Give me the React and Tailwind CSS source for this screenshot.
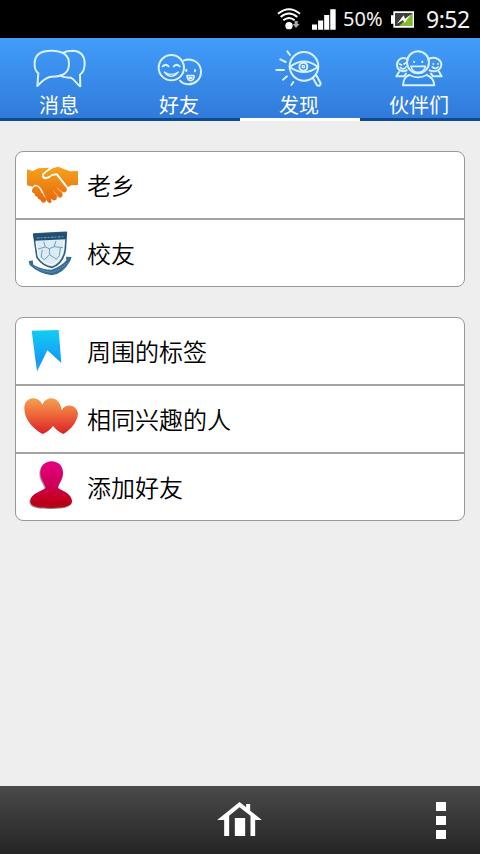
import { useState } from "react"

const stroke = { fill: "none", stroke: "#d8f1ff", strokeWidth: 6, strokeLinecap: "round", strokeLinejoin: "round" }

function ChatIcon() {
  return (
    <svg viewBox="0 6 360 162" className="w-[120px] h-[54px] block" {...stroke}>
      <path d="M112 150 L115 112 C104 104 103 92 104 80 C105 55 124 44 154 44 C188 44 207 56 207 83 C207 111 190 122 155 122 C132 124 125 139 112 150 Z" />
      <path d="M191 50 C198 45 208 44 218 44 C244 45 254 60 254 83 C254 101 249 109 240 116 L241 151 C230 144 224 130 212 125 C200 125 190 124 182 119" />
    </svg>
  )
}

function SmileIcon() {
  return (
    <svg viewBox="360 6 360 162" className="w-[120px] h-[54px] block" {...stroke}>
      <circle cx="514" cy="95" r="38" />
      <path d="M488 91 q9 -9 18 0 M521 91 q9 -9 18 0" />
      <path d="M493 108 Q514 134 535 108 Q514 122 493 108 Z" strokeWidth="4" />
      <path d="M552 73 C576 64 603 80 603 107 C603 132 582 145 566 145 C554 145 546 141 540 134" />
      <path d="M559 101 v4 M585 102 v4" />
      <path d="M561 119 H582 Q583 133 572 134 Q562 133 561 119 Z" strokeWidth="5" />
      <path d="M568 126 h7" />
    </svg>
  )
}

function DiscoverIcon() {
  return (
    <svg viewBox="0 6 360 162" className="w-[120px] h-[54px] block" {...stroke}>
      <circle cx="192" cy="91" r="43" />
      <path d="M149 93 Q192 60 234 93 Q192 123 149 93 Z" />
      <circle cx="190" cy="92" r="12" />
      <rect x="187" y="89" width="6" height="6" strokeWidth="4" />
      <path d="M219 127 L231 148 Q241 152 242 142 L229 118" />
      <path d="M142 46 L150 57 M121 70 L137 78 M109 102 L132 102 M129 131 L141 121 M154 147 L160 138" />
    </svg>
  )
}

function PartnersIcon() {
  return (
    <svg viewBox="360 6 360 162" className="w-[120px] h-[54px] block" {...stroke}>
      <circle cx="534" cy="79" r="33" />
      <path d="M522 77 v1 M547 77 v1" />
      <path d="M513 91 H556 Q552 109 534 109 Q517 109 513 91 Z" strokeWidth="5" />
      <path d="M508 117 C492 123 490 135 489 148 H583 C582 135 577 123 560 117" />
      <path d="M508 117 Q534 131 560 117" strokeWidth="5" />
      <path d="M499 68 C482 61 470 75 471 88 C472 102 486 110 500 103" />
      <path d="M568 68 C588 60 605 73 604 87 C602 103 585 110 569 103" />
      <path d="M479 84 l6 3 M497 81 l-5 3 M481 94 q9 10 17 -1 M580 83 v2 M594 83 v2 M577 93 q10 8 17 0" strokeWidth="5" />
      <path d="M477 108 L469 121 H492 L498 113 M597 107 L605 121 H579 L573 113" />
    </svg>
  )
}

function HandshakeIcon() {
  return (
    <svg viewBox="24 21 213 198" className="w-[71px] h-[66px] block shrink-0">
      <defs>
        <linearGradient id="orange" x1="0" y1="65" x2="0" y2="176" gradientUnits="userSpaceOnUse">
          <stop offset="0" stopColor="#f6a31c" />
          <stop offset="1" stopColor="#e8650c" />
        </linearGradient>
      </defs>
      <g fill="url(#orange)">
        <path d="M57 73 L74 78 L91 70 L124 68 L103 86 Q99 98 109 102 Q120 105 132 93 L145 91 L171 124 Q181 133 174 140 Q168 145 160 139 Q168 150 160 157 Q153 160 146 153 Q149 164 140 166 Q133 167 128 160 Q134 174 126 174 Q116 173 112 156 L101 133 Q93 119 80 119 L74 125 L57 121 Z" />
        <path d="M150 65 L186 79 L210 78 V120 L190 121 L180 126 L148 85 L132 87 Q118 101 107 94 Q107 87 120 79 Q134 67 150 65 Z" />
        <path d="M78 126 Q86 120 94 130 L101 143 Q108 147 107 153 Q116 158 114 168 Q109 176 101 171 L97 164 Q89 163 88 155 Q79 154 80 146 Q71 144 72 136 Q73 129 78 126 Z" />
      </g>
      <path d="M136 139 L151 155 M147 129 L164 143" stroke="#fbd9a6" strokeWidth="2" fill="none" />
    </svg>
  )
}

function SchoolIcon() {
  return (
    <svg viewBox="24 15 213 198" className="w-[71px] h-[66px] block shrink-0" strokeLinejoin="round">
      <path d="M77 57 Q126 54 175 52 L172 103 Q166 144 133 157 Q104 153 87 127 Z" fill="#dcecf5" stroke="#2d5f83" strokeWidth="5" />
      <path d="M76 57 L176 52 L174 73 L79 77 Z" fill="#214f73" />
      <path d="M86 69 L168 65" stroke="#7fa6c0" strokeWidth="3" strokeDasharray="9 3 5 4" fill="none" />
      <path d="M84 82 L91 123 Q106 146 132 150 Q158 138 166 101 L168 78" stroke="#fff" strokeWidth="3" fill="none" />
      <path d="M112 96 L124 101 L138 95 M124 101 L125 119 M112 96 L107 80 M138 95 L144 78 M112 96 L90 102 M138 95 L165 98 M125 119 L109 134 M125 119 L145 133 M103 105 L99 126 L109 134 M157 99 L154 122 L145 133" stroke="#6d9ebd" strokeWidth="3" fill="none" />
      <path d="M62 139 L74 136 L76 149 Q103 164 130 164 Q158 156 175 136 L174 125 L191 126 L187 137 Q165 177 131 181 Q91 175 65 150 Z" fill="#356d94" />
      <path d="M80 156 Q103 169 131 172 Q158 165 176 144" stroke="#6b9dbd" strokeWidth="3" strokeDasharray="6 2" fill="none" />
    </svg>
  )
}

function TagIcon() {
  return (
    <svg viewBox="24 18 213 198" className="w-[71px] h-[66px] block shrink-0">
      <defs>
        <linearGradient id="blue" x1="0" y1="54" x2="0" y2="180" gradientUnits="userSpaceOnUse">
          <stop offset="0" stopColor="#12cdf2" />
          <stop offset="0.75" stopColor="#1599f5" />
          <stop offset="1" stopColor="#3bb0f8" />
        </linearGradient>
      </defs>
      <path d="M71 56 L152 54 L160 153 L118 115 L87 179 Z" fill="url(#blue)" />
    </svg>
  )
}

function HeartsIcon() {
  return (
    <svg viewBox="24 18 213 198" className="w-[71px] h-[66px] block shrink-0">
      <defs>
        <linearGradient id="red" x1="0" y1="55" x2="0" y2="162" gradientUnits="userSpaceOnUse">
          <stop offset="0" stopColor="#f5a04f" />
          <stop offset="0.5" stopColor="#ec6238" />
          <stop offset="1" stopColor="#dc1f27" />
        </linearGradient>
      </defs>
      <path d="M104 162 C84 151 49 125 49 84 C49 49 92 45 103 74 C114 45 157 47 161 91 C171 69 208 72 210 103 C206 130 186 151 166 162 C154 157 144 149 135 138 C126 150 115 158 104 162 Z" fill="url(#red)" />
    </svg>
  )
}

function PersonIcon() {
  return (
    <svg viewBox="24 12 213 198" className="w-[71px] h-[66px] block shrink-0">
      <defs>
        <linearGradient id="pink" x1="0" y1="34" x2="0" y2="176" gradientUnits="userSpaceOnUse">
          <stop offset="0" stopColor="#e6007e" />
          <stop offset="0.5" stopColor="#cf0058" />
          <stop offset="0.8" stopColor="#c4051f" />
          <stop offset="1" stopColor="#ae0712" />
        </linearGradient>
        <filter id="shade">
          <feDropShadow dx="-2" dy="3" stdDeviation="2" floodColor="#000" floodOpacity="0.5" />
        </filter>
      </defs>
      <path d="M131 34 C152 34 165 49 165 69 C165 88 154 97 150 113 C156 121 192 128 192 154 C192 169 168 174 129 174 C90 174 67 170 67 154 C67 130 106 122 113 113 C108 97 97 88 97 69 C97 49 110 34 131 34 Z" fill="url(#pink)" filter="url(#shade)" />
    </svg>
  )
}

function StatusBar() {
  return (
    <div className="h-[38px] bg-black flex items-center justify-end pr-[10px] text-[#f2f2f2] font-['Noto_Sans',sans-serif]">
      <svg viewBox="50 20 72 72" className="w-6 h-6 mr-[11px]" fill="none" stroke="#fff" strokeWidth="6">
        <path d="M53 40 Q86 13 119 40 M61 50 Q86 29 111 50 M69 60 Q86 46 103 60" />
        <circle cx="86" cy="76" r="11" fill="#fff" stroke="none" />
        <path d="M103 62 h9 v9 h6 L107 83 L97 71 h6 Z" fill="#aaa" stroke="none" />
      </svg>
      <svg viewBox="155 26 71 62" className="w-6 h-[21px] mr-[7px]" fill="#fff">
        <path d="M155 72 h15 v15 h-15 Z M173 60 h15 v27 h-15 Z M191 44 h15 v43 h-15 Z M209 27 h16 v60 h-16 Z" />
      </svg>
      <span className="text-[20px] leading-[38px] w-[39px] whitespace-nowrap mr-[9px]">50%</span>
      <svg viewBox="393 32 69 51" className="w-[23px] h-[17px] mr-[12px]">
        <path d="M393 45 h7 v-12 h62 v49 h-62 v-12 h-7 Z" fill="#fff" />
        <path d="M405 38 h52 v39 h-52 Z" fill="#3c403c" />
        <path d="M457 38 V77 H417 Z" fill="#83b92d" />
        <path d="M411 70 L431 45 L435 55 L452 43 L434 68 L429 59 Z" fill="#fff" />
      </svg>
      <span className="text-[23px] leading-[38px] w-[44px] tracking-[-0.5px] whitespace-nowrap">9:52</span>
    </div>
  )
}

const tabs = [
  { name: "消息", Icon: ChatIcon },
  { name: "好友", Icon: SmileIcon },
  { name: "发现", Icon: DiscoverIcon },
  { name: "伙伴们", Icon: PartnersIcon },
]

const groups = [
  [
    { name: "老乡", Icon: HandshakeIcon },
    { name: "校友", Icon: SchoolIcon },
  ],
  [
    { name: "周围的标签", Icon: TagIcon },
    { name: "相同兴趣的人", Icon: HeartsIcon },
    { name: "添加好友", Icon: PersonIcon },
  ],
]

function App() {
  const [active, setActive] = useState(2)

  return (
    <div className="w-[480px] h-[854px] flex flex-col bg-[#eeeeee] overflow-hidden font-['Noto_Sans_CJK_SC',sans-serif]">
      <StatusBar />

      <nav className="h-[83px] grid grid-cols-4 bg-linear-to-b from-[#429dfa] to-[#3079d9]">
        {tabs.map(({ name, Icon }, i) => (
          <button
            key={name}
            onClick={() => setActive(i)}
            className={`flex flex-col items-center border-b-3 ${active === i ? "border-white" : "border-[#0d4a94]"}`}
          >
            <Icon />
            <span className="text-[20px] leading-[25px] text-white pr-[2px]">{name}</span>
          </button>
        ))}
      </nav>

      <main className="flex-1 px-[15px] pt-[30px] flex flex-col gap-[30px]">
        {groups.map((rows, i) => (
          <ul key={i} className="bg-white border border-[#999999] rounded-lg divide-y-2 divide-[#a3a3a3] overflow-hidden">
            {rows.map(({ name, Icon }) => (
              <li key={name} className="flex items-center box-content h-[66px]">
                <Icon />
                <span className="text-[24px] leading-[64px] pb-[1px] text-black font-[350]">{name}</span>
              </li>
            ))}
          </ul>
        ))}
      </main>

      <footer className="h-[68px] grid grid-cols-3 items-center bg-linear-to-b from-[#4a4a4a] to-[#252525]">
        <svg viewBox="51 66 134 102" className="w-[45px] h-[34px] col-start-2 justify-self-center mr-[2px] mb-[2px]" fill="#fff">
          <path d="M51 120 L118 66 L138 82 V72 H150 V92 L185 120 H165 V168 H151 V107 L118 82 L87 107 V168 H72 V120 Z" />
          <path d="M104 114 h31 v54 h-31 Z" />
        </svg>
        <div className="justify-self-end mr-[34px] flex flex-col gap-[5px]">
          <div className="w-[10px] h-[9px] bg-white" />
          <div className="w-[10px] h-[9px] bg-white" />
          <div className="w-[10px] h-[9px] bg-white" />
        </div>
      </footer>
    </div>
  )
}

export default App
